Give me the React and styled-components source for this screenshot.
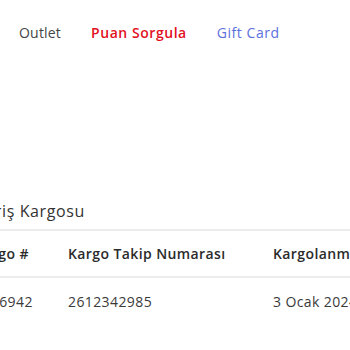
import React from 'react';
import styled, { createGlobalStyle } from 'styled-components';

const Global = createGlobalStyle`
  html, body {
    margin: 0;
    padding: 0;
    background: #fff;
    overflow: hidden;
  }
  body {
    font-family: "Open Sans", "Liberation Sans", sans-serif;
    color: #333;
  }
`;

const Page = styled.div`
  width: 350px;
  height: 350px;
  overflow: hidden;
`;

const TopNav = styled.nav`
  display: flex;
  align-items: center;
  gap: 30px;
  padding: 23px 0 0 19px;
  height: 20px;
`;

const NavItem = styled.a`
  font-size: 14px;
  line-height: 20px;
  letter-spacing: ${p => (p.$tone ? '0.55px' : '0.2px')};
  text-decoration: none;
  font-weight: ${p => (p.$tone === 'red' ? 600 : 400)};
  color: ${p => (p.$tone === 'red' ? '#e3101d' : p.$tone === 'blue' ? '#5c70dd' : '#454545')};
`;

const Section = styled.section`
  margin: 157px 0 0 -26px;
  width: 480px;
`;

const Title = styled.h3`
  margin: 0 0 7px 4px;
  font-size: 16px;
  line-height: 22px;
  font-weight: 500;
  letter-spacing: 0.6px;
  color: #333;
`;

const Table = styled.div`
  border-top: 2px solid #ececec;
`;

const Row = styled.div`
  display: grid;
  grid-template-columns: 94px 205px 1fr;
  align-items: center;
  height: ${p => (p.$head ? '45px' : '46px')};
  border-bottom: ${p => (p.$head ? '2px solid #ececec' : 'none')};
`;

const Cell = styled.div`
  font-size: 14px;
  letter-spacing: 0.4px;
  font-weight: ${p => (p.$head ? 600 : 400)};
  color: ${p => (p.$head ? '#2b2b2b' : '#3a3a3a')};
  white-space: nowrap;
`;

export default function App() {
  return (
    <Page>
      <Global />
      <TopNav>
        <NavItem href="#">Outlet</NavItem>
        <NavItem href="#" $tone="red">Puan Sorgula</NavItem>
        <NavItem href="#" $tone="blue">Gift Card</NavItem>
      </TopNav>
      <Section>
        <Title>Giriş Kargosu</Title>
        <Table>
          <Row $head>
            <Cell $head>Kargo #</Cell>
            <Cell $head>Kargo Takip Numarası</Cell>
            <Cell $head>Kargolanma Tarihi</Cell>
          </Row>
          <Row>
            <Cell>1356942</Cell>
            <Cell>2612342985</Cell>
            <Cell>3 Ocak 2024</Cell>
          </Row>
        </Table>
      </Section>
    </Page>
  );
}
